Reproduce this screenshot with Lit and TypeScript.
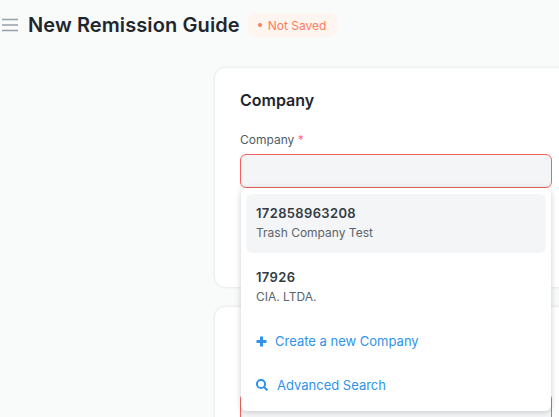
import { LitElement, html, css } from "lit";
import { customElement } from "lit/decorators.js";

@customElement("app-root")
export class AppRoot extends LitElement {
  static styles = css`
    :host {
      display: block;
      height: 417px;
      overflow: hidden;
      background: #f9fafa;
      font-family: Inter, "Liberation Sans", sans-serif;
      color: #1f272e;
    }

    .header {
      display: flex;
      align-items: center;
      height: 50px;
      padding-left: 2px;
      box-sizing: border-box;
    }

    .menu {
      width: 16px;
      height: 16px;
      margin-right: 10px;
      color: #98a1a9;
      flex: none;
    }

    h1 {
      margin: 0;
      font-size: 20px;
      line-height: 28px;
      font-weight: 600;
      letter-spacing: 0.1px;
      white-space: nowrap;
    }

    .status {
      display: flex;
      align-items: center;
      gap: 6px;
      height: 24px;
      margin-left: 8px;
      padding: 0 11px 0 10px;
      border-radius: 8px;
      background: #fff5f0;
      color: #ff7b5c;
      font-size: 12px;
      white-space: nowrap;
    }

    .status::before {
      content: "";
      width: 4px;
      height: 4px;
      border-radius: 50%;
      background: currentColor;
    }

    .form {
      display: flex;
      flex-direction: column;
      gap: 20px;
      width: 420px;
      margin: 18px 0 0 215px;
    }

    .card {
      box-sizing: border-box;
      padding: 22px 25px;
      background: #fff;
      border-radius: 10px;
      box-shadow: 0 0 3px rgba(25, 39, 52, 0.14);
    }

    .first {
      height: 219px;
    }

    .second {
      height: 180px;
      padding-top: 86px;
    }

    h2 {
      margin: 0 0 22px;
      font-size: 16px;
      line-height: 20px;
      font-weight: 600;
    }

    .field {
      position: relative;
      width: 312px;
    }

    label {
      display: block;
      margin-bottom: 6px;
      font-size: 12px;
      line-height: 16px;
      color: #525c66;
    }

    .req {
      color: #f56b9a;
    }

    .input {
      box-sizing: border-box;
      height: 34px;
      border: 1px solid #f3625c;
      border-radius: 6px;
      background: #f4f5f6;
    }

    .dropdown {
      position: absolute;
      top: 56px;
      left: 1px;
      z-index: 2;
      box-sizing: border-box;
      width: 310px;
      height: 223px;
      padding: 6px 5px 5px;
      background: #fff;
      border-radius: 6px;
      box-shadow: 0 1px 6px rgba(25, 39, 52, 0.22);
    }

    .option {
      box-sizing: border-box;
      height: 59px;
      padding: 9px 10px;
      margin-bottom: 5px;
      border-radius: 6px;
    }

    .option + .option {
      margin-bottom: 2px;
    }

    .option.active {
      background: #f4f5f6;
    }

    .option b {
      display: block;
      font-size: 13px;
      line-height: 20px;
      font-weight: 600;
      letter-spacing: 0.35px;
      color: #333c44;
    }

    .option span {
      display: block;
      font-size: 12px;
      line-height: 18px;
      margin-top: 1px;
      color: #5b646d;
    }

    .action {
      display: flex;
      align-items: center;
      height: 44px;
      padding-left: 10px;
      font-size: 13px;
      color: #2f93ec;
    }

    .action svg {
      flex: none;
    }

    .plus {
      width: 11px;
      height: 11px;
      margin-right: 8px;
    }

    .search {
      width: 12px;
      height: 12px;
      margin-right: 9px;
    }
  `;

  render() {
    return html`
      <div class="header">
        <svg class="menu" viewBox="0 0 16 16" fill="none" stroke="currentColor" stroke-width="1.6">
          <path d="M0 2.5h16M0 8h16M0 13.5h16" />
        </svg>
        <h1>New Remission Guide</h1>
        <div class="status">Not Saved</div>
      </div>
      <div class="form">
        <section class="card first">
          <h2>Company</h2>
          <div class="field">
            <label>Company <span class="req">*</span></label>
            <div class="input"></div>
            <div class="dropdown">
              <div class="option active">
                <b>172858963208</b>
                <span>Trash Company Test</span>
              </div>
              <div class="option">
                <b>17926</b>
                <span>CIA. LTDA.</span>
              </div>
              <div class="action">
                <svg class="plus" viewBox="0 0 11 11" fill="none" stroke="currentColor" stroke-width="3">
                  <path d="M5.5 0.5v10M0.5 5.5h10" />
                </svg>
                Create a new Company
              </div>
              <div class="action">
                <svg class="search" viewBox="0 0 12 12" fill="none" stroke="currentColor" stroke-width="2">
                  <circle cx="5" cy="5" r="4.1" />
                  <path d="M8 8l3.4 3.4" />
                </svg>
                Advanced Search
              </div>
            </div>
          </div>
        </section>
        <section class="card second">
          <div class="field">
            <div class="input"></div>
          </div>
        </section>
      </div>
    `;
  }
}
